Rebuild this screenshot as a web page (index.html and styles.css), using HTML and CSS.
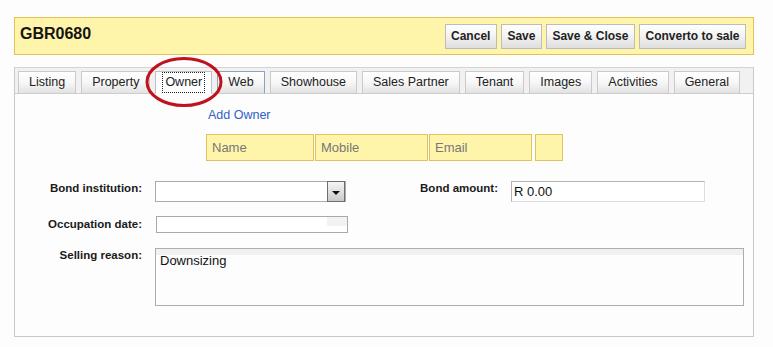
FILE: index.html
```html
<!DOCTYPE html>
<html>
<head>
<meta charset="utf-8">
<link rel="stylesheet" href="styles.css">
</head>
<body>
<div class="page">
  <div class="header">
    <div class="title">GBR0680</div>
    <div class="actions">
      <button class="btn">Cancel</button>
      <button class="btn">Save</button>
      <button class="btn">Save &amp; Close</button>
      <button class="btn">Converto to sale</button>
    </div>
  </div>

  <div class="panel">
    <div class="tabs">
      <div class="tab">Listing</div>
      <div class="tab">Property</div>
      <div class="tab active"><span class="focus">Owner</span></div>
      <div class="tab hover">Web</div>
      <div class="tab">Showhouse</div>
      <div class="tab">Sales Partner</div>
      <div class="tab">Tenant</div>
      <div class="tab">Images</div>
      <div class="tab">Activities</div>
      <div class="tab">General</div>
    </div>
    <svg class="ring" width="84" height="54" viewBox="0 0 84 54">
      <ellipse cx="41" cy="26" rx="37" ry="23.5" fill="none" stroke="#c0121c" stroke-width="3"/>
    </svg>

    <div class="body">
      <div class="owner">
        <a class="add-link">Add Owner</a>
        <div class="owner-row">
          <div class="yfield w-name">Name</div>
          <div class="yfield w-mobile">Mobile</div>
          <div class="yfield w-email">Email</div>
          <div class="yfield w-blank"></div>
        </div>
      </div>

      <div class="row row-bond">
        <div class="label">Bond institution:</div>
        <div class="select">
          <span class="arrow"><span class="tri"></span></span>
        </div>
        <div class="label label2">Bond amount:</div>
        <div class="input amount">R 0.00</div>
      </div>

      <div class="row row-occ">
        <div class="label">Occupation date:</div>
        <div class="input date"><span class="date-btn"></span></div>
      </div>

      <div class="row row-sell">
        <div class="label">Selling reason:</div>
        <div class="textarea">Downsizing</div>
      </div>
    </div>
  </div>
</div>
</body>
</html>
```
FILE: styles.css
```css
* { box-sizing: border-box; }
html, body { margin: 0; padding: 0; background: #fdfdfd; }
body { font-family: "Liberation Sans", Arial, sans-serif; color: #222; }

.page { padding: 17px 0 0 14px; width: 754px; }

.header {
  height: 38px;
  border: 1px solid #e0c257;
  background: #fff5aa;
  display: flex;
  align-items: center;
  justify-content: space-between;
  padding: 0 7px 0 5px;
}
.title { font-size: 16px; font-weight: bold; color: #141414; margin-top: -5px; }
.actions { display: flex; gap: 4px; }
.btn {
  height: 25px;
  padding: 0 5.5px;
  border: 1px solid #bcbcbc;
  background: linear-gradient(#ffffff 0%, #f4f4f4 45%, #dedede 100%);
  font-family: "Liberation Sans", Arial, sans-serif;
  font-weight: bold;
  font-size: 12px;
  color: #222;
  margin: 0;
}

.panel {
  position: relative;
  margin-top: 12px;
  height: 270px;
  border: 1px solid #c8c8c8;
  border-top-color: #d4d4d4;
  background: #fdfdfd;
}
.tabs {
  height: 26px;
  background: #f1f1f1;
  border-bottom: 1px solid #cdcdcd;
  display: flex;
  align-items: flex-end;
  gap: 5px;
  padding-left: 3px;
}
.tab {
  height: 23px;
  margin-bottom: -1px;
  padding: 0 10px;
  border: 1px solid #cacaca;
  border-bottom-color: #cdcdcd;
  background: linear-gradient(#ffffff 0%, #f7f7f7 50%, #e2e2e2 100%);
  font-size: 12.5px;
  line-height: 21px;
  color: #222;
  white-space: nowrap;
}
.tab.active {
  background: #ffffff;
  border-color: #c0c0c0;
  border-bottom-color: #ffffff;
  padding: 0 7px;
}
.tab.active .focus {
  display: inline-block;
  outline: 1px dotted #222;
  outline-offset: 0;
  padding: 0 2px;
  line-height: 19px;
  margin-top: 1px;
}
.tab.hover { border-color: #8ea2c0; border-bottom-color: #cdcdcd; }

.ring { position: absolute; left: 128px; top: -12px; }

.body { padding: 14px 0 0 0; }

.owner { margin-left: 191px; }
.add-link { display: block; margin-left: 2px; color: #2f5fc8; font-size: 12.5px; line-height: 15px; }
.owner-row { display: flex; gap: 1px; margin-top: 11px; }
.yfield {
  height: 27px;
  border: 1px solid #e2c25a;
  background: #fff5aa;
  color: #777;
  font-size: 13px;
  line-height: 25px;
  padding-left: 5px;
}
.w-name { width: 108px; }
.w-mobile { width: 113px; }
.w-email { width: 103px; }
.w-blank { width: 28px; margin-left: 2px; }

.row { display: flex; align-items: flex-start; }
.label {
  width: 127px;
  text-align: right;
  font-size: 11.5px;
  font-weight: bold;
  color: #1a1a1a;
  padding-top: 1px;
}
.row-bond { margin-top: 20px; }
.select {
  margin-left: 13px;
  width: 191px;
  height: 21px;
  border: 1px solid #ababab;
  background: #fff;
  position: relative;
}
.arrow {
  position: absolute;
  right: 0;
  top: -1px;
  width: 18px;
  height: 21px;
  border: 1px solid #6e6e6e;
  background: linear-gradient(#f6f6f6, #c9c9c9);
  display: flex;
  align-items: center;
  justify-content: center;
}
.tri {
  width: 0; height: 0;
  border-left: 4px solid transparent;
  border-right: 4px solid transparent;
  border-top: 4px solid #111;
  margin-top: 2px;
}
.label2 { width: 152px; margin-left: 0; }
.input {
  border: 1px solid #b4b4b4;
  border-right-color: #dedede;
  border-bottom-color: #dedede;
  background: #fff;
  font-size: 13px;
  color: #111;
}
.amount {
  margin-left: 13px;
  width: 194px;
  height: 21px;
  line-height: 19px;
  padding-left: 2px;
}
.row-occ { margin-top: 14px; }
.row-occ .label { padding-top: 2px; }
.date {
  margin-left: 14px;
  width: 192px;
  height: 17px;
  border-color: #a9a9a9;
  position: relative;
}
.date-btn {
  position: absolute;
  right: 0;
  top: 0;
  width: 20px;
  height: 9px;
  background: #f2f2f2;
}
.row-sell { margin-top: 15px; }
.textarea {
  margin-left: 13px;
  width: 589px;
  height: 58px;
  border: 1px solid #adadad;
  background: linear-gradient(#f1f1f1 0, #f1f1f1 6px, #fdfdfd 6px);
  font-size: 13px;
  color: #111;
  padding: 4px 0 0 4px;
  line-height: 15px;
}
```
